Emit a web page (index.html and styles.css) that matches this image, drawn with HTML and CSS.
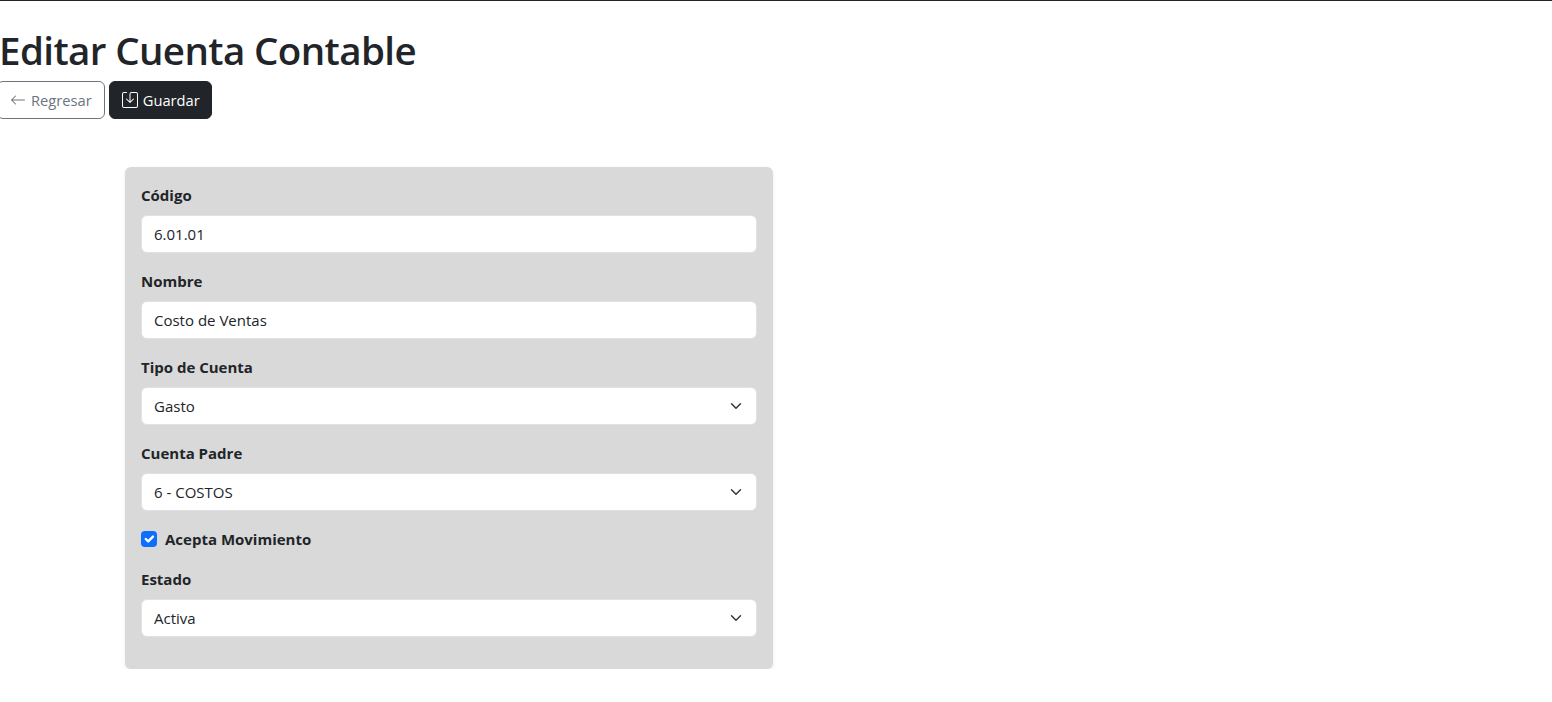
FILE: index.html
```html
<!DOCTYPE html>
<html lang="es">
  <head>
    <meta charset="UTF-8" />
    <title>Editar Cuenta Contable</title>
    <link rel="stylesheet" href="styles.css">
  </head>
  <body>
    <hr class="top-rule" />
    <div class="page-head">
      <h1>Editar Cuenta Contable</h1>
      <div class="actions">
        <a class="btn btn-outline" href="#">
          <svg class="bi" viewBox="0 0 16 16" fill="currentColor"><path fill-rule="evenodd" d="M15 8a.5.5 0 0 0-.5-.5H2.707l3.147-3.146a.5.5 0 1 0-.708-.708l-4 4a.5.5 0 0 0 0 .708l4 4a.5.5 0 0 0 .708-.708L2.707 8.5H14.5A.5.5 0 0 0 15 8"/></svg>
          Regresar
        </a>
        <button class="btn btn-dark" type="submit" form="cuenta">
          <svg class="bi" viewBox="0 0 16 16" fill="currentColor"><path d="M2 1a1 1 0 0 0-1 1v12a1 1 0 0 0 1 1h12a1 1 0 0 0 1-1V2a1 1 0 0 0-1-1H9.5a1 1 0 0 0-1 1v7.293l2.646-2.647a.5.5 0 0 1 .708.708l-3.5 3.5a.5.5 0 0 1-.708 0l-3.5-3.5a.5.5 0 1 1 .708-.708L7.5 9.293V2a2 2 0 0 1 2-2H14a2 2 0 0 1 2 2v12a2 2 0 0 1-2 2H2a2 2 0 0 1-2-2V2a2 2 0 0 1 2-2h2.5a.5.5 0 0 1 0 1z"/></svg>
          Guardar
        </button>
      </div>
    </div>
    <form id="cuenta" class="card">
      <div class="field">
        <label for="codigo">Código</label>
        <input id="codigo" class="control" type="text" value="6.01.01" />
      </div>
      <div class="field">
        <label for="nombre">Nombre</label>
        <input id="nombre" class="control" type="text" value="Costo de Ventas" />
      </div>
      <div class="field">
        <label for="tipo">Tipo de Cuenta</label>
        <select id="tipo" class="control select">
          <option>Gasto</option>
        </select>
      </div>
      <div class="field">
        <label for="padre">Cuenta Padre</label>
        <select id="padre" class="control select">
          <option>6 - COSTOS</option>
        </select>
      </div>
      <div class="check">
        <input id="acepta" type="checkbox" checked />
        <label for="acepta">Acepta Movimiento</label>
      </div>
      <div class="field">
        <label for="estado">Estado</label>
        <select id="estado" class="control select">
          <option>Activa</option>
        </select>
      </div>
    </form>
  </body>
</html>
```

FILE: styles.css
```css
* {
  box-sizing: border-box;
}
body {
  margin: 0;
  background: #fff;
  color: #212529;
  font-family: "Open Sans", "Noto Sans", "Liberation Sans", sans-serif;
  font-size: 15px;
  line-height: 24px;
}
.top-rule {
  height: 1px;
  margin: 0;
  border: none;
  background: #212529;
}
/* cabecera */
.page-head {
  padding-top: 25px;
}
h1 {
  margin: 0 0 7px -1px;
  font-size: 38.5px;
  font-weight: 600;
  letter-spacing: -0.6px;
  line-height: 48px;
  white-space: nowrap;
}
.actions {
  display: flex;
  gap: 4px;
  margin-left: -3px;
}
.btn {
  display: flex;
  align-items: center;
  gap: 5px;
  height: 38px;
  padding: 0 12px;
  border: 1px solid #6c757d;
  border-radius: 6px;
  font: inherit;
  font-size: 14.7px;
  text-decoration: none;
  cursor: pointer;
}
.btn-outline {
  background: #fff;
  color: #6c757d;
}
.btn-dark {
  padding-right: 11px;
  background: #212529;
  border-color: #212529;
  color: #fff;
}
.bi {
  width: 16px;
  height: 16px;
}
/* formulario */
.card {
  width: 648px;
  margin: 48px 0 0 125px;
  padding: 16px 16px 32px;
  background: #d9d9d9;
  border-radius: 6px;
  box-shadow: 0 2px 4px rgba(0, 0, 0, 0.075);
}
.field {
  margin-bottom: 16px;
}
.field:last-child {
  margin-bottom: 0;
}
.field label {
  display: block;
  margin-bottom: 8px;
  font-weight: 700;
}
.control {
  display: block;
  width: 100%;
  height: 38px;
  padding: 0 12px;
  border: 1px solid #dee2e6;
  border-radius: 6px;
  background-color: #fff;
  color: #212529;
  font: inherit;
  outline: none;
}
.select {
  appearance: none;
  padding-right: 36px;
  background-image: url("data:image/svg+xml,%3csvg xmlns='http://www.w3.org/2000/svg' viewBox='0 0 16 16'%3e%3cpath fill='none' stroke='%23343a40' stroke-linecap='round' stroke-linejoin='round' stroke-width='2' d='m2 5 6 6 6-6'/%3e%3c/svg%3e");
  background-repeat: no-repeat;
  background-position: right 12px center;
  background-size: 16px 12px;
}
.check {
  display: flex;
  align-items: center;
  gap: 8px;
  margin-bottom: 16px;
  font-weight: 700;
}
.check input {
  appearance: none;
  flex: none;
  width: 16px;
  height: 16px;
  margin: 0;
  border-radius: 4px;
  background-color: #0d6efd;
  background-image: url("data:image/svg+xml,%3csvg xmlns='http://www.w3.org/2000/svg' viewBox='0 0 20 20'%3e%3cpath fill='none' stroke='%23fff' stroke-linecap='round' stroke-linejoin='round' stroke-width='3' d='m6 10 3 3 6-6'/%3e%3c/svg%3e");
  background-size: 100% 100%;
}
```
